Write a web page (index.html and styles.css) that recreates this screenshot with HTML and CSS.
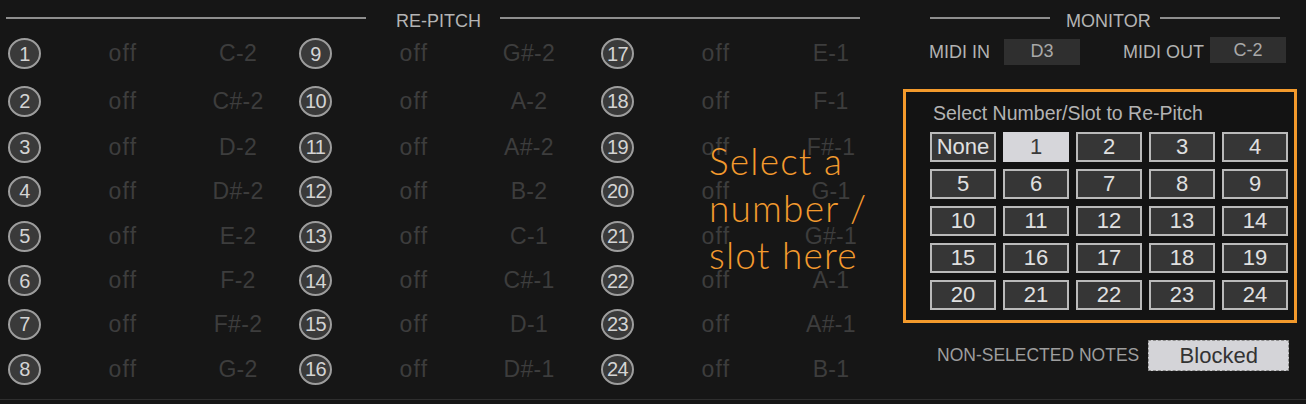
FILE: index.html
```html
<!DOCTYPE html>
<html>
<head>
<meta charset="utf-8">
<link rel="stylesheet" href="styles.css">
</head>
<body>
<div class="app">
  <section class="repitch">
    <header class="sec-head rp-head">
      <span class="rule"></span>
      <span class="sec-title">RE-PITCH</span>
      <span class="rule"></span>
    </header>
    <div class="groups">
      <div class="group">
        <span class="badge">1</span><span class="off">off</span><span class="note">C-2</span>
        <span class="badge">2</span><span class="off">off</span><span class="note">C#-2</span>
        <span class="badge">3</span><span class="off">off</span><span class="note">D-2</span>
        <span class="badge">4</span><span class="off">off</span><span class="note">D#-2</span>
        <span class="badge">5</span><span class="off">off</span><span class="note">E-2</span>
        <span class="badge">6</span><span class="off">off</span><span class="note">F-2</span>
        <span class="badge">7</span><span class="off">off</span><span class="note">F#-2</span>
        <span class="badge">8</span><span class="off">off</span><span class="note">G-2</span>
      </div>
      <div class="group">
        <span class="badge">9</span><span class="off">off</span><span class="note">G#-2</span>
        <span class="badge">10</span><span class="off">off</span><span class="note">A-2</span>
        <span class="badge">11</span><span class="off">off</span><span class="note">A#-2</span>
        <span class="badge">12</span><span class="off">off</span><span class="note">B-2</span>
        <span class="badge">13</span><span class="off">off</span><span class="note">C-1</span>
        <span class="badge">14</span><span class="off">off</span><span class="note">C#-1</span>
        <span class="badge">15</span><span class="off">off</span><span class="note">D-1</span>
        <span class="badge">16</span><span class="off">off</span><span class="note">D#-1</span>
      </div>
      <div class="group">
        <span class="badge">17</span><span class="off">off</span><span class="note">E-1</span>
        <span class="badge">18</span><span class="off">off</span><span class="note">F-1</span>
        <span class="badge">19</span><span class="off">off</span><span class="note">F#-1</span>
        <span class="badge">20</span><span class="off">off</span><span class="note">G-1</span>
        <span class="badge">21</span><span class="off">off</span><span class="note">G#-1</span>
        <span class="badge">22</span><span class="off">off</span><span class="note">A-1</span>
        <span class="badge">23</span><span class="off">off</span><span class="note">A#-1</span>
        <span class="badge">24</span><span class="off">off</span><span class="note">B-1</span>
      </div>
    </div>
    <div class="annotation">Select a<br>number /<br>slot here</div>
  </section>

  <aside class="panel">
    <header class="sec-head mon-head">
      <span class="rule"></span>
      <span class="sec-title">MONITOR</span>
      <span class="rule"></span>
    </header>
    <div class="midi">
      <span class="midi-label">MIDI IN</span>
      <span class="midi-val in">D3</span>
      <span class="midi-label out-label">MIDI OUT</span>
      <span class="midi-val out">C-2</span>
    </div>
    <div class="picker">
      <div class="picker-title">Select Number/Slot to Re-Pitch</div>
      <div class="slots">
        <span class="slot">None</span><span class="slot selected">1</span><span class="slot">2</span><span class="slot">3</span><span class="slot">4</span>
        <span class="slot">5</span><span class="slot">6</span><span class="slot">7</span><span class="slot">8</span><span class="slot">9</span>
        <span class="slot">10</span><span class="slot">11</span><span class="slot">12</span><span class="slot">13</span><span class="slot">14</span>
        <span class="slot">15</span><span class="slot">16</span><span class="slot">17</span><span class="slot">18</span><span class="slot">19</span>
        <span class="slot">20</span><span class="slot">21</span><span class="slot">22</span><span class="slot">23</span><span class="slot">24</span>
      </div>
    </div>
    <div class="nonsel">
      <span class="nonsel-label">NON-SELECTED NOTES</span>
      <span class="blocked">Blocked</span>
    </div>
  </aside>
</div>
<div class="bottom-rule"></div>
</body>
</html>
```

FILE: styles.css
```css
html, body {
  margin: 0;
  padding: 0;
  background: #161616;
}
body {
  font-family: "Liberation Sans", Arial, sans-serif;
  color: #b0b0b0;
  width: 1306px;
  height: 404px;
  overflow: hidden;
}
.app {
  display: flex;
  height: 399px;
}
.repitch {
  position: relative;
  width: 903px;
  flex: none;
}
.sec-head {
  display: grid;
  align-items: start;
  justify-content: start;
  height: 30px;
}
.rule {
  display: block;
  height: 2px;
  margin-top: 17px;
  background: #8e8e8e;
}
.sec-title {
  font-size: 18px;
  line-height: 20px;
  margin-top: 11px;
  color: #b4b4b4;
  white-space: nowrap;
}
.rp-head {
  grid-template-columns: 360px auto 360px;
  padding-left: 6px;
}
.rp-head .sec-title {
  margin-left: 30px;
  margin-right: 19px;
}
.groups {
  display: grid;
  grid-template-columns: 291px 302px 262px;
  padding-left: 8px;
}
.group {
  display: grid;
  grid-template-columns: 34px 162px 68px;
  grid-template-rows: 47px 48px 44px 44px 46px 43px 44px 46px;
  align-items: center;
}
.badge {
  box-sizing: border-box;
  width: 33px;
  height: 31px;
  border-radius: 50%;
  border: 2px solid #9d9d9d;
  background: #3a3a3a;
  color: #d4d4d4;
  font-size: 20px;
  letter-spacing: -0.6px;
  display: flex;
  align-items: center;
  justify-content: center;
  line-height: 1;
}
.off, .note {
  text-align: center;
  font-size: 23px;
  color: #3d3d3d;
  white-space: nowrap;
}
.off {
  letter-spacing: 1.2px;
}
.note {
  letter-spacing: 0.3px;
}
.annotation {
  position: absolute;
  left: 709px;
  top: 137px;
  font-family: "Lato", "Open Sans", sans-serif;
  font-weight: 300;
  font-size: 37px;
  line-height: 47px;
  color: #f39a2e;
  letter-spacing: 1.2px;
}

.panel {
  flex: 1;
}
.mon-head {
  grid-template-columns: 120px auto 120px;
  padding-left: 27px;
}
.mon-head .sec-title {
  margin-left: 16px;
  margin-right: 9px;
}
.midi {
  display: flex;
  align-items: center;
  margin-top: 7px;
  height: 27px;
  padding-left: 26px;
}
.midi-label {
  font-size: 18px;
  color: #b2b2b2;
  white-space: nowrap;
  margin-top: 4px;
}
.midi-val {
  box-sizing: border-box;
  width: 76px;
  height: 26px;
  background: #2f2f2f;
  color: #a9a9a9;
  font-size: 18px;
  display: flex;
  align-items: center;
  justify-content: center;
}
.midi-val.in {
  margin-left: 14px;
  margin-top: 2px;
}
.out-label {
  margin-left: 43px;
}
.midi-val.out {
  margin-left: 6px;
  margin-top: -1px;
}
.picker {
  box-sizing: border-box;
  margin-top: 25px;
  width: 394px;
  height: 234px;
  border: 3px solid #f39a2c;
  background: #131313;
  padding: 10px 0 0 24px;
}
.picker-title {
  font-size: 19.5px;
  line-height: 22px;
  color: #b3b3b3;
  margin-left: 3px;
}
.slots {
  margin-top: 8px;
  display: grid;
  grid-template-columns: repeat(5, 66px);
  grid-auto-rows: 30px;
  column-gap: 7px;
  row-gap: 7px;
}
.slot {
  box-sizing: border-box;
  border: 2px solid #bababa;
  background: #363636;
  color: #e0e0e0;
  font-size: 22px;
  display: flex;
  align-items: center;
  justify-content: center;
  line-height: 1;
}
.slot.selected {
  background: #d6d6da;
  border-color: #d6d6da;
  color: #3a3a3a;
}
.nonsel {
  display: flex;
  align-items: center;
  margin-top: 17px;
  padding-left: 34px;
}
.nonsel-label {
  font-size: 17.5px;
  color: #9e9e9e;
  white-space: nowrap;
}
.blocked {
  box-sizing: border-box;
  margin-left: 9px;
  width: 141px;
  height: 31px;
  background: #d4d4d8;
  border: 1px dashed #8c8c8c;
  color: #333333;
  font-size: 22px;
  display: flex;
  align-items: center;
  justify-content: center;
}
.bottom-rule {
  height: 1px;
  background: #2e2e2e;
}
```
